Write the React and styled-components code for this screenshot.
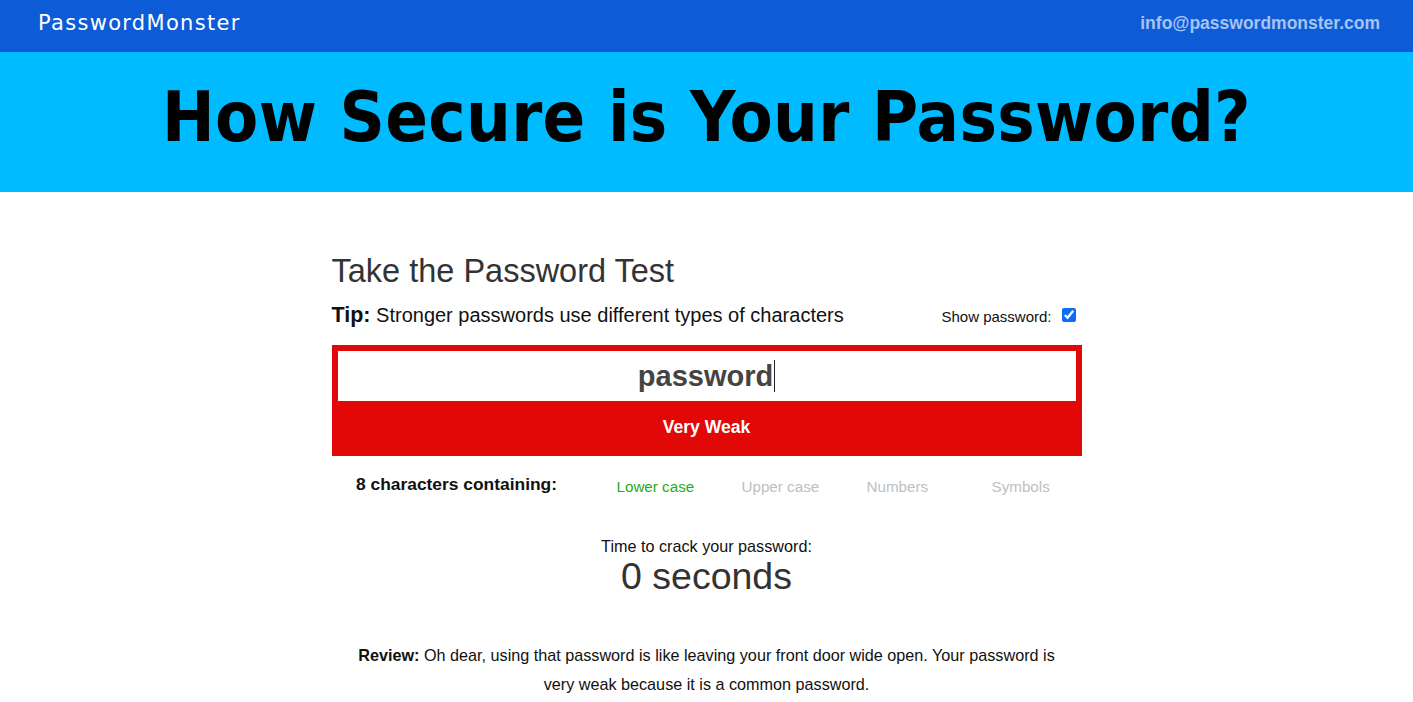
import React from 'react'
import styled, {createGlobalStyle} from 'styled-components'

const GlobalStyle = createGlobalStyle`
  body {
    margin: 0;
    font-family: 'Liberation Sans', Arial, sans-serif;
    background: #fff;
  }
`

const NavBar = styled.div`
  display: flex;
  align-items: center;
  justify-content: space-between;
  height: 52px;
  padding: 0 33px 0 38px;
  background-color: #0d5bd6;
`

const Logo = styled.div`
  color: #fff;
  font-family: 'DejaVu Sans', sans-serif;
  font-size: 21px;
  letter-spacing: 1.3px;
  padding-bottom: 6px;
`

const Email = styled.a`
  color: #a6c3f2;
  font-size: 17.5px;
  font-weight: bold;
  text-decoration: none;
  padding-bottom: 5px;
`

const Banner = styled.div`
  display: flex;
  align-items: center;
  justify-content: center;
  height: 140px;
  background-color: #00bbff;

  h1 {
    margin: 0;
    padding-bottom: 10px;
    font-family: 'DejaVu Sans Condensed', 'DejaVu Sans', sans-serif;
    font-size: 70px;
    font-weight: bold;
    letter-spacing: 0.35px;
    color: #000;
  }
`

const Main = styled.div`
  width: 750px;
  margin: 0 auto;
  padding-top: 60px;
`

const Heading = styled.h2`
  margin: 0;
  font-size: 32.5px;
  font-weight: normal;
  color: #333;
  line-height: 38px;
`

const TipRow = styled.div`
  display: flex;
  justify-content: space-between;
  align-items: flex-end;
  margin-top: 13px;
  margin-bottom: 17px;
  font-size: 20px;
  color: #111;

  b {
    font-size: 21.5px;
  }
`

const ShowToggle = styled.label`
  display: flex;
  align-items: center;
  gap: 10px;
  font-size: 15px;
  color: #111;
  padding: 0 6px 3px 0;

  input {
    margin: 0 0 3px;
    width: 14px;
    height: 14px;
    accent-color: #0b6ef5;
  }
`

const Meter = styled.div`
  background-color: #e30808;
  padding: 6px 6px 0;
`

const Field = styled.div`
  display: flex;
  justify-content: center;
  align-items: center;
  height: 50px;
  background: #fff;
  font-size: 29px;
  font-weight: bold;
  color: #444;
`

const Caret = styled.span`
  display: inline-block;
  width: 1px;
  height: 32px;
  margin-left: 1px;
  background: #222;
`

const Strength = styled.div`
  height: 55px;
  line-height: 53px;
  text-align: center;
  color: #fff;
  font-size: 17.6px;
  font-weight: bold;
`

const Stats = styled.div`
  display: grid;
  grid-template-columns: 250px repeat(4, 125px);
  align-items: center;
  margin-top: 18px;
`

const StatLabel = styled.div`
  text-align: center;
  font-size: 17.4px;
  font-weight: bold;
  color: #111;
`

const StatItem = styled.div`
  padding: 4px 0 0 35px;
  font-size: 15.2px;
  color: ${(p) => (p.on ? '#2aaa1e' : '#c0c0c0')};
`

const Crack = styled.div`
  margin-top: 42px;
  text-align: center;
  color: #111;
  font-size: 16.2px;
  line-height: 18px;

  strong {
    display: block;
    font-size: 37.5px;
    font-weight: normal;
    color: #333;
    line-height: 42px;
  }
`

const Review = styled.p`
  margin: 44px 0 0;
  padding: 0 18px;
  text-align: center;
  font-size: 16.2px;
  line-height: 29px;
  color: #111;
`

const App = () => {
  const kinds = [
    {name: 'Lower case', on: true},
    {name: 'Upper case', on: false},
    {name: 'Numbers', on: false},
    {name: 'Symbols', on: false},
  ]

  return (
    <React.Fragment>
      <GlobalStyle />
      <NavBar>
        <Logo>PasswordMonster</Logo>
        <Email href="#">info@passwordmonster.com</Email>
      </NavBar>
      <Banner>
        <h1>How Secure is Your Password?</h1>
      </Banner>
      <Main>
        <Heading>Take the Password Test</Heading>
        <TipRow>
          <span>
            <b>Tip:</b> Stronger passwords use different types of characters
          </span>
          <ShowToggle>
            Show password: <input type="checkbox" defaultChecked />
          </ShowToggle>
        </TipRow>
        <Meter>
          <Field>
            password
            <Caret />
          </Field>
          <Strength>Very Weak</Strength>
        </Meter>
        <Stats>
          <StatLabel>8 characters containing:</StatLabel>
          {kinds.map((k) => (
            <StatItem key={k.name} on={k.on ? 1 : 0}>
              {k.name}
            </StatItem>
          ))}
        </Stats>
        <Crack>
          Time to crack your password:
          <strong>0 seconds</strong>
        </Crack>
        <Review>
          <b>Review:</b> Oh dear, using that password is like leaving your front door wide open. Your password is
          very weak because it is a common password.
        </Review>
      </Main>
    </React.Fragment>
  )
}

export default App
